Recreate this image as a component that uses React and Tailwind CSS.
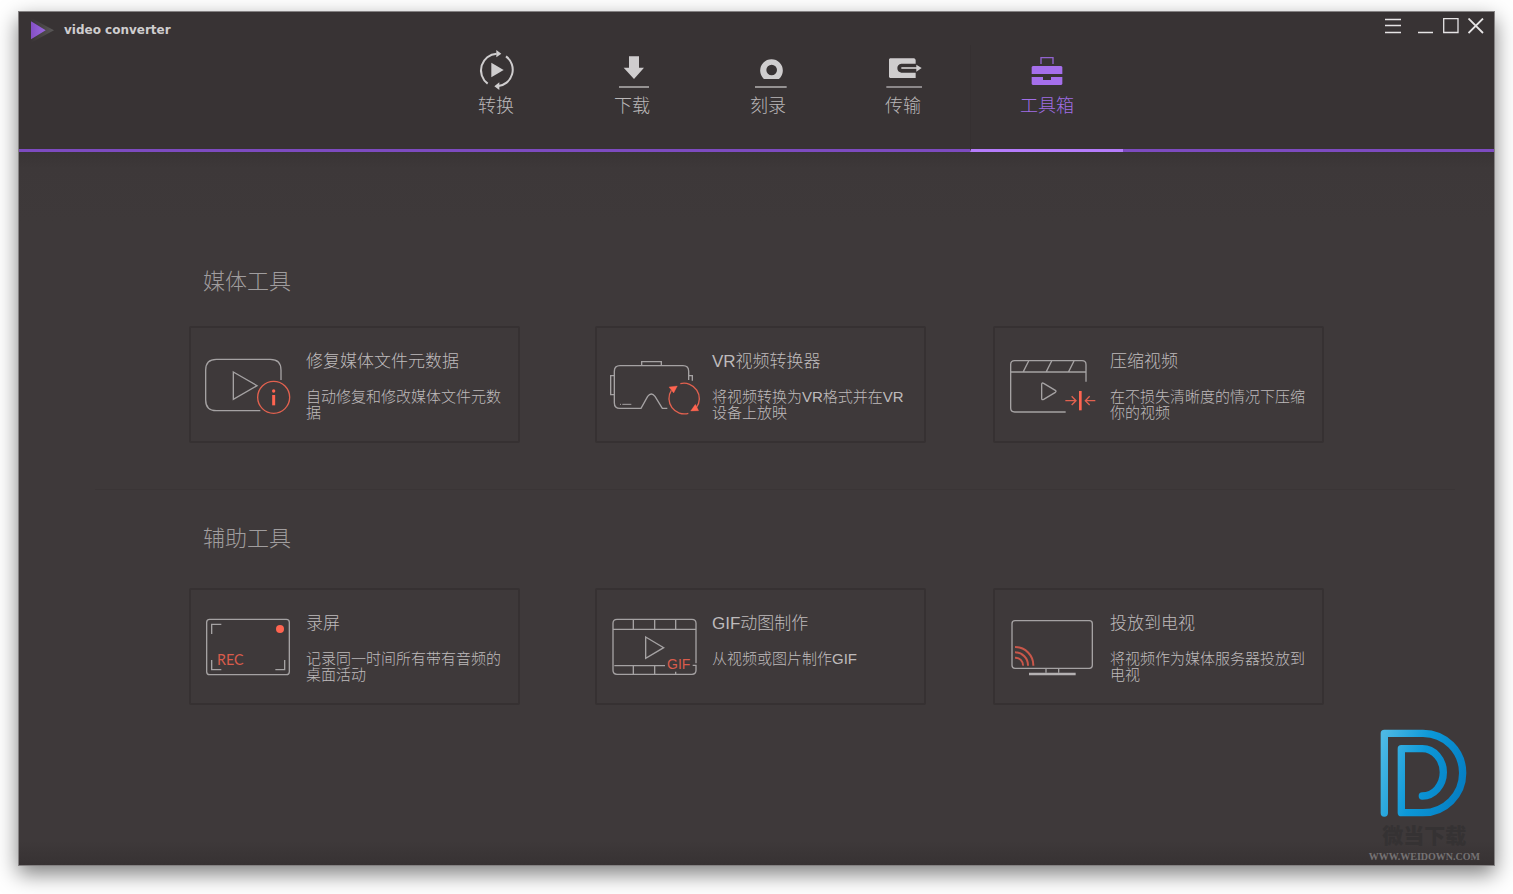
import React from "react";

const FONT = "font-['Liberation_Sans','Noto_Sans_CJK_SC',sans-serif]";

/* ---------- navigation icons ---------- */

function NavSvg({ viewBox, children }) {
  return (
    <svg className="h-11 w-12" viewBox={viewBox} fill="none" aria-hidden="true">
      {children}
    </svg>
  );
}

const ConvertIcon = () => (
  <NavSvg viewBox="36 24 144 132">
    <path d="M83 131A50 50 0 0 1 110 41" stroke="#cfcdce" strokeWidth="6" />
    <path d="M138 49A50 50 0 0 1 112 139" stroke="#cfcdce" strokeWidth="6" />
    <path d="M109 30L124 41L109 52Z M118 127L103 139L118 150Z" fill="#cfcdce" />
    <path d="M94 68L131 90L94 112Z" fill="#cfcdce" />
  </NavSvg>
);

const DownloadIcon = () => (
  <NavSvg viewBox="444 24 144 132">
    <path d="M507 49H537V83H552L522 117L491 83H507Z" fill="#cfcdce" />
    <path d="M477 141H567" stroke="#a9a6a7" strokeWidth="5" />
  </NavSvg>
);

const BurnIcon = () => (
  <NavSvg viewBox="852 24 144 132">
    <path
      fillRule="evenodd"
      d="M912 117A34 34 0 1 1 957 117Z M919 90A16 16 0 1 0 951 90A16 16 0 1 0 919 90Z"
      fill="#cfcdce"
    />
    <path d="M885 141H980" stroke="#a9a6a7" strokeWidth="5" />
  </NavSvg>
);

const TransferIcon = () => (
  <NavSvg viewBox="57 24 144 132">
    <path
      d="M90 55H163L167 59V71H124Q112 73 112 84Q112 96 124 98H167V114H90L87 111V58Z"
      fill="#cfcdce"
    />
    <path d="M124 84H172" stroke="#cfcdce" strokeWidth="5" />
    <path d="M169 74L185 84L169 95Z" fill="#cfcdce" />
    <path d="M79 141H186" stroke="#a9a6a7" strokeWidth="5" />
  </NavSvg>
);

const ToolboxIcon = () => (
  <NavSvg viewBox="488 24 144 132">
    <path d="M542 72V53H578V72" stroke="#9164cf" strokeWidth="4" />
    <path d="M517 78H603L606 81V102H514V81Z" fill="#a56feb" />
    <path d="M514 111H548V120H572V111H606V132L603 135H517L514 132Z" fill="#a56feb" />
  </NavSvg>
);

/* ---------- tool card drawings ---------- */

function ToolSvg({ viewBox, children }) {
  return (
    <svg
      className="h-[66px] w-24 shrink-0"
      viewBox={viewBox}
      fill="none"
      stroke="#a5a2a3"
      strokeWidth="4"
      aria-hidden="true"
    >
      {children}
    </svg>
  );
}

const MetadataIcon = () => (
  <ToolSvg viewBox="63 288 288 198">
    <path d="M303 375V345Q303 313 271 313H109Q77 313 77 345V435Q77 467 109 467H241" />
    <path d="M160 351L231 392L160 433Z" />
    <circle cx="281" cy="427" r="48" stroke="#e2614f" />
    <path d="M281 420V451" stroke="#ff6450" strokeWidth="9" />
    <circle cx="281" cy="408" r="5" fill="#ff6450" stroke="none" />
  </ToolSvg>
);

const VrIcon = () => (
  <ToolSvg viewBox="66 108 288 198">
    <path d="M247 280H232L210 244Q199 230 188 244L168 280H105Q88 280 88 263V169Q88 152 105 152H294Q311 152 311 169V195" />
    <path d="M170 151V140H229V151" />
    <path d="M88 182H77V239H88" />
    <path d="M311 182H322V197" />
    <path d="M105 268H108M112 268H139" strokeWidth="3" />
    <path d="M286 206A46 46 0 0 1 334 278" stroke="#e2614f" />
    <path d="M310 295A46 46 0 0 1 259 226" stroke="#e2614f" />
    <path d="M252 216L277 213L266 234Z M341 287L317 288L331 268Z" fill="#ff6450" stroke="#ff6450" strokeWidth="1" />
  </ToolSvg>
);

const CompressIcon = () => (
  <ToolSvg viewBox="60 108 288 198">
    <path d="M303 200V149Q303 137 291 137H89Q77 137 77 149V279Q77 291 89 291H242" />
    <path d="M77 171H303M131 138L115 170M200 138L184 170M267 138L251 170" />
    <path d="M170 208V250Q170 256 176 253L211 232Q215 229 211 226L176 205Q170 202 170 208Z" />
    <path d="M286 228V286" stroke="#ff6450" strokeWidth="8" />
    <path
      d="M241 257H272M260 244L273 257L260 270M331 257H301M314 244L301 257L314 270"
      stroke="#e2614f"
    />
  </ToolSvg>
);

const RecordIcon = () => (
  <ToolSvg viewBox="63 309 288 198">
    <rect x="80" y="328" width="248" height="166" rx="9" />
    <path d="M95 372V343H124M95 450V479H124M286 479H314V450" />
    <circle cx="300" cy="357" r="12" fill="#ff6450" stroke="none" />
    <text
      x="111"
      y="465"
      fill="#d95c4c"
      stroke="none"
      className="font-['Lato',sans-serif] text-[43px]"
    >
      REC
    </text>
  </ToolSvg>
);

const GifIcon = () => (
  <ToolSvg viewBox="66 114 288 198">
    <path d="M333 265V145Q333 133 321 133H96Q84 133 84 145V286Q84 298 96 298H321Q333 298 333 286V271H323" />
    <path d="M84 163H333M145 133V163M209 133V163M272 133V163" />
    <path d="M88 272H240M145 272V298M209 272V298M272 290V298" />
    <path d="M182 186L236 218L182 250Z" />
    <text
      x="246"
      y="281"
      fill="#d95c4c"
      stroke="none"
      className="font-['Liberation_Sans',sans-serif] text-[42px]"
    >
      GIF
    </text>
  </ToolSvg>
);

const CastIcon = () => (
  <ToolSvg viewBox="60 114 288 198">
    <rect x="81" y="137" width="241" height="143" rx="9" />
    <path d="M183 281V293M221 281V293" />
    <path d="M132 297H272" stroke="#b4b1b2" strokeWidth="7" />
    <path
      d="M90 216A55 55 0 0 1 145 272M90 232A39 39 0 0 1 129 272M90 248A23 23 0 0 1 114 272"
      stroke="#c9574a"
      strokeWidth="6"
    />
  </ToolSvg>
);

/* ---------- data ---------- */

const TABS = [
  { label: "转换", Icon: ConvertIcon, width: "w-[136px]" },
  { label: "下载", Icon: DownloadIcon, width: "w-[136px]" },
  { label: "刻录", Icon: BurnIcon, width: "w-[136px]" },
  { label: "传输", Icon: TransferIcon, width: "w-[134px]" },
  { label: "工具箱", Icon: ToolboxIcon, width: "w-[153px]", active: true },
];

const MEDIA_TOOLS = [
  { title: "修复媒体文件元数据", text: "自动修复和修改媒体文件元数据", Icon: MetadataIcon },
  { title: "VR视频转换器", text: "将视频转换为VR格式并在VR设备上放映", Icon: VrIcon },
  { title: "压缩视频", text: "在不损失清晰度的情况下压缩你的视频", Icon: CompressIcon },
];

const HELPER_TOOLS = [
  { title: "录屏", text: "记录同一时间所有带有音频的桌面活动", Icon: RecordIcon },
  { title: "GIF动图制作", text: "从视频或图片制作GIF", Icon: GifIcon },
  { title: "投放到电视", text: "将视频作为媒体服务器投放到电视", Icon: CastIcon },
];

/* ---------- layout parts ---------- */

function WindowButton({ label, children }) {
  return (
    <button type="button" aria-label={label}>
      <svg className="size-4" viewBox="0 0 16 16" fill="none" stroke="#e6e4e5" aria-hidden="true">
        {children}
      </svg>
    </button>
  );
}

function TitleBar() {
  return (
    <div className="flex h-[33px] items-start justify-between pr-[10px] pl-3">
      <div className="flex items-center pt-[6px]">
        <svg className="h-6 w-6" viewBox="0 0 72 72" aria-hidden="true">
          <defs>
            <linearGradient id="mark" x1="0" x2="1">
              <stop offset="0" stopColor="#8450c4" />
              <stop offset="1" stopColor="#9b68e0" />
            </linearGradient>
            <linearGradient id="markBack" x1="0" x2="1">
              <stop offset="0" stopColor="#383334" />
              <stop offset="1" stopColor="#5a5858" />
            </linearGradient>
          </defs>
          <path d="M0 0L69 37L0 74Z" fill="url(#markBack)" />
          <path d="M0 10L44 37L0 64Z" fill="url(#mark)" />
        </svg>
        <h1 className="ml-[9px] font-['DejaVu_Sans',sans-serif] text-xs font-bold text-[#cfcdce]">
          video converter
        </h1>
      </div>
      <div className="flex gap-[9px] pt-[6px]">
        <div className="mr-2 flex">
          <WindowButton label="菜单">
            <path d="M0 1.5H16M0 7.5H16M0 14.5H16" strokeWidth="1.3" />
          </WindowButton>
        </div>
        <WindowButton label="最小化">
          <path d="M0 14.5H15" strokeWidth="1.5" />
        </WindowButton>
        <WindowButton label="最大化">
          <path d="M0.7 0.7H15V14.5H0.7Z" strokeWidth="1.3" />
        </WindowButton>
        <WindowButton label="关闭">
          <path d="M0.5 0.5L15 15M15 0.5L0.5 15" strokeWidth="1.8" />
        </WindowButton>
      </div>
    </div>
  );
}

function Tab({ label, Icon, width, active }) {
  const tone = active
    ? "border-b-[#b57cfb] border-l border-l-[#353031] text-[#a06ee6]"
    : "border-transparent text-[#bab7b8]";
  return (
    <button
      type="button"
      aria-current={active ? "page" : undefined}
      className={`-mb-[3px] flex h-[107px] flex-col items-center border-b-3 pt-[3px] ${width} ${tone}`}
    >
      <Icon />
      <span className="mt-[2px] text-lg leading-6 font-light">{label}</span>
    </button>
  );
}

function ToolCard({ title, text, Icon }) {
  return (
    <button
      type="button"
      className="flex min-h-[117px] w-[331px] items-start gap-[9px] rounded-xs border-2 border-[#363132] pt-[22px] pr-3 pl-[10px] text-left"
    >
      <span className="flex pt-px">
        <Icon />
      </span>
      <span className="flex flex-col font-light text-[#bebbbc]">
        <span className="text-[17px] leading-6">{title}</span>
        <span className="mt-[15px] text-[15px] leading-4">{text}</span>
      </span>
    </button>
  );
}

function ToolSection({ heading, tools, spacing }) {
  return (
    <section className="px-[170px]">
      <h2 className="pl-[14px] text-[22px] leading-8 font-light text-[#a09d9e]">{heading}</h2>
      <div className={`grid grid-cols-[406fr_398fr_331fr] ${spacing}`}>
        {tools.map((tool) => (
          <ToolCard key={tool.title} {...tool} />
        ))}
      </div>
    </section>
  );
}

function Watermark() {
  return (
    <div className="absolute right-[14px] bottom-0 flex flex-col items-center">
      <svg
        className="mb-[5px] h-[92px] w-[90px]"
        viewBox="120 50 270 276"
        fill="none"
        aria-hidden="true"
      >
        <defs>
          <linearGradient id="brand" gradientUnits="userSpaceOnUse" x1="125" y1="100" x2="382" y2="180">
            <stop offset="0" stopColor="#4db9e4" />
            <stop offset="0.5" stopColor="#0c98d8" />
            <stop offset="1" stopColor="#0680c4" />
          </linearGradient>
        </defs>
        <path
          d="M136 308V69H252A119 119 0 0 1 252 307H187V115H250A63 71 0 0 1 250 257"
          stroke="url(#brand)"
          strokeWidth="22"
          strokeLinecap="round"
          strokeLinejoin="round"
        />
      </svg>
      <span className="text-[21px] leading-6 font-black text-[#353233]">微当下载</span>
      <span className="font-['Liberation_Serif',serif] text-[10px] leading-[17px] font-bold text-[#757273]">
        WWW.WEIDOWN.COM
      </span>
    </div>
  );
}

export default function App() {
  return (
    <div className={`flex min-h-screen bg-white px-[18px] pt-[11px] pb-7 ${FONT}`}>
      <div className="relative flex flex-1 flex-col border border-[#848182] bg-[#3e393a] shadow-[0_8px_20px_rgba(0,0,0,0.5)]">
        <header className="border-b-3 border-[#7d4bc0] bg-[#383334]">
          <TitleBar />
          <nav className="flex justify-center pl-[38px]">
            {TABS.map((tab) => (
              <Tab key={tab.label} {...tab} />
            ))}
          </nav>
        </header>
        <main className="flex-1 bg-[linear-gradient(to_bottom,#393435_0,#3d3839_16px,#3e393a_70px,#3e393a_calc(100%-24px),#373233_100%)] pt-[114px]">
          <ToolSection heading="媒体工具" tools={MEDIA_TOOLS} spacing="mt-7" />
          <hr className="mt-[46px] mr-[39px] mb-[33px] ml-[76px] border-[#3a3536]" />
          <ToolSection heading="辅助工具" tools={HELPER_TOOLS} spacing="mt-[33px]" />
        </main>
        <Watermark />
      </div>
    </div>
  );
}
